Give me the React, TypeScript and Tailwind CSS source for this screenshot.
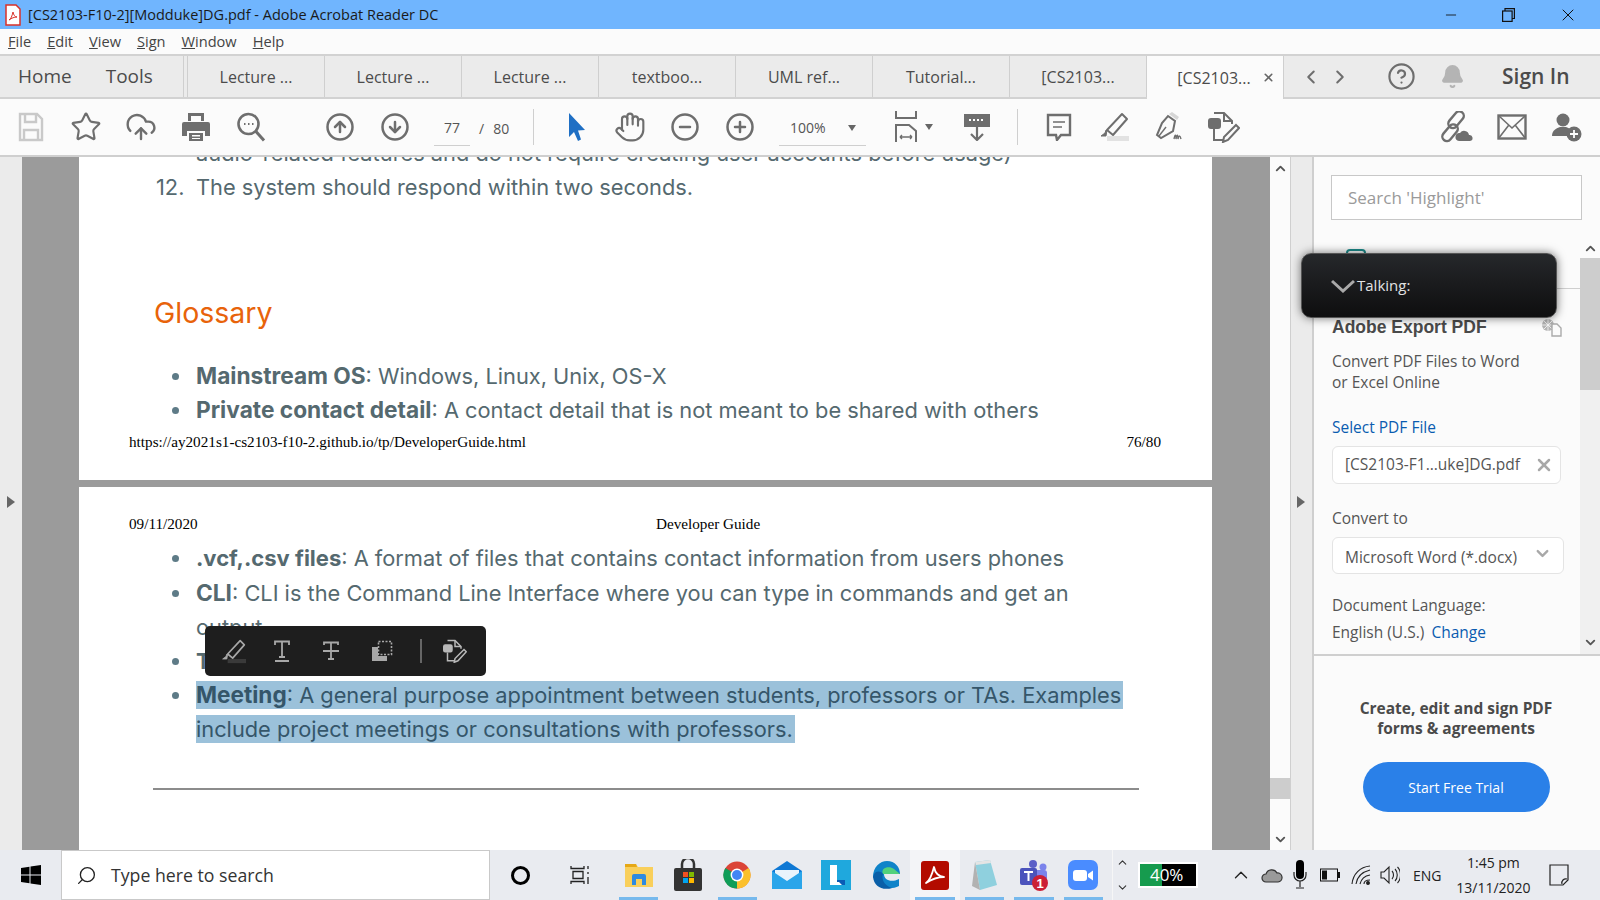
import React from "react";
import { Star, CloudUpload, Hand, CircleMinus, CirclePlus, CircleArrowUp, CircleArrowDown, ChevronLeft, ChevronRight, ChevronUp, ChevronDown, X, Bell, Search, Minus, CircleHelp } from "lucide-react";

const G = "#6e6e6e";

function Slot({ w = 55, className = "", children }: { w?: number; className?: string; children: React.ReactNode }) {
  return <div className={"flex items-center justify-center shrink-0 " + className} style={{ width: w }}>{children}</div>;
}

const Save = () => (
  <svg width="26" height="30" viewBox="0 0 26 30" fill="none" stroke="#c9c9c9" strokeWidth="2.4"><path d="M2 2h17l5 5v21H2z" /><path d="M7 2v8h11V2M6 28V18h14v10" /></svg>
);
const Printer = () => (
  <svg width="30" height="30" viewBox="0 0 30 30" fill={G}><path d="M7 1h16v8h-3V4H10v5H7z" /><path d="M3 10h24a2 2 0 0 1 2 2v12h-5v-5H6v5H1V12a2 2 0 0 1 2-2z" /><path d="M8 21h14v8H8zm3 2v1.500h8V23zm0 3v1h8v-1z" fillRule="evenodd" /></svg>
);
const FindIcon = () => (
  <svg width="30" height="30" viewBox="0 0 30 30" fill="none" stroke={G} strokeWidth="2.6"><circle cx="12.500" cy="12" r="10" /><path d="M20 19.500l8 9" strokeWidth="3" /><path d="M8 12h1.500M12 12h1.500M16 12h1.500" strokeWidth="2.200" /></svg>
);
const Pointer = () => (
  <svg width="20" height="30" viewBox="0 0 20 30"><path d="M2 1l16 17-7 .5 3 9-3 1.500-4-9-5 5z" fill="#1f6fc4" /></svg>
);
const FitIcon = () => (
  <svg width="24" height="32" viewBox="0 0 24 32" fill="none" stroke={G} strokeWidth="2"><path d="M2 0v7h20V0" /><path d="M2 31V14h13l7 6v11" /><path d="M6 26h12M6 26l2-2M6 26l2 2M18 26l-2-2M18 26l-2 2" strokeWidth="1.400" /></svg>
);
const ReadMode = () => (
  <svg width="28" height="28" viewBox="0 0 28 28" fill="none"><rect x="1" y="1" width="26" height="13" fill={G} /><path d="M6 7h2M10 7h2M14 7h2M18 7h2" stroke="#fff" strokeWidth="2" /><path d="M14 14v13M8 21l6 6 6-6" stroke={G} strokeWidth="2.200" /></svg>
);
const Comment = () => (
  <svg width="26" height="28" viewBox="0 0 26 28" fill="none" stroke={G} strokeWidth="2.400"><path d="M2 2h22v20H15l-4 5-1-5H2z" /><path d="M7 9h12M7 14h9" strokeWidth="1.600" /></svg>
);
const HighlightIcon = ({ c = G, bar = "#e2e2e2", size = 30 }: { c?: string; bar?: string; size?: number }) => (
  <svg width={size} height={size} viewBox="0 0 30 30" fill="none"><rect x="8" y="24" width="22" height="5" fill={bar} /><path d="M23 2l5 5-14 16-6-5z" stroke={c} strokeWidth="2" strokeLinejoin="round" /><path d="M8 18l-1 6h-5l4-3 1-3" fill={c} stroke={c} /></svg>
);
const SignIcon = () => (
  <svg width="30" height="30" viewBox="0 0 30 30" fill="none" stroke={G} strokeWidth="2"><path d="M14 4l7 5-2 10-12 7-4-3 5-12z" /><path d="M5 24l7-9" strokeWidth="1.400" /><path d="M15 2l3-2 7 5-2 3z" fill="#d6d6d6" stroke="none" /><path d="M20 27c1-5 2-5 2 0 1-5 2-5 2 0 1-4 2-4 3 0" strokeWidth="1.400" /></svg>
);
const EditDoc = ({ c = G, size = 32 }: { c?: string; size?: number }) => (
  <svg width={size} height={size} viewBox="0 0 32 32" fill="none" stroke={c} strokeWidth="2"><path d="M6 2h10l8 8v3M6 18v11h9" /><path d="M16 2v8h8" /><rect x="1" y="8" width="11" height="9" rx="2" fill={c} /><path d="M28 14l3 3-11 12-5 2 1-5z" /></svg>
);
const LinkCloud = () => (
  <svg width="32" height="32" viewBox="0 0 32 32" fill="none" stroke={G} strokeWidth="2.400"><rect x="11" y="-1" width="9" height="19" rx="4.500" transform="rotate(40 15 8)" /><rect x="5" y="12" width="9" height="19" rx="4.500" transform="rotate(40 9 21)" /><path d="M18 30a4 4 0 0 1 1-8 5 5 0 0 1 9 2 3 3 0 0 1 1 6z" fill={G} stroke="none" /></svg>
);
const UserPlus = () => (
  <svg width="32" height="30" viewBox="0 0 32 30"><circle cx="12" cy="8" r="6.500" fill={G} /><path d="M1 24c0-6 5-8 8-9h6c3 1 4 2 5 3-3 2-4 4-4 6H1z" fill={G} /><circle cx="23" cy="22" r="7.500" fill={G} /><path d="M23 18v8M19 22h8" stroke="#fff" strokeWidth="1.800" /></svg>
);

const Toolbar = () => (
  <div className="h-[58px] bg-[#fbfbfb] flex items-center pl-[3px] border-b-2 border-[#cfcfcf] shrink-0">
    <Slot><Save /></Slot>
    <Slot><Star size={32} strokeWidth={1.600} color={G} /></Slot>
    <Slot><CloudUpload size={32} strokeWidth={1.800} color={G} /></Slot>
    <Slot><Printer /></Slot>
    <Slot><FindIcon /></Slot>
    <Slot className="ml-[34px]"><CircleArrowUp size={30} strokeWidth={2} color={G} /></Slot>
    <Slot><CircleArrowDown size={30} strokeWidth={2} color={G} /></Slot>
    <div className="ml-[12px] w-[36px] h-[36px] mt-[2px] border-b border-[#cfcfcf] flex items-center justify-center text-[14px] text-[#555]">77</div>
    <div className="ml-[9px] w-[54px] text-[14px] text-[#555] mt-[2px]"><span className="mr-[9px]">/</span>80</div>
    <div className="w-px h-[36px] bg-[#cfcfcf] mr-[15px]" />
    <Slot><Pointer /></Slot>
    <div className="-ml-[2px]"><Slot><Hand size={32} strokeWidth={1.600} color={G} /></Slot></div>
    <Slot><CircleMinus size={30} strokeWidth={2} color={G} /></Slot>
    <Slot><CirclePlus size={30} strokeWidth={2} color={G} /></Slot>
    <div className="ml-[12px] w-[87px] h-[36px] mt-[2px] border-b border-[#cfcfcf] flex items-center text-[14px] text-[#555] pl-[11px]">
      100%
      <span className="ml-[22px] w-0 h-0 border-x-[4px] border-x-transparent border-t-[6px] border-t-[#666]" />
    </div>
    <div className="ml-[28px] flex items-center w-[40px]"><FitIcon /><span className="ml-[7px] w-0 h-0 border-x-[4px] border-x-transparent border-t-[6px] border-t-[#666]" /></div>
    <div className="ml-[3px]"><Slot w={80}><ReadMode /></Slot></div>
    <div className="w-px h-[36px] bg-[#cfcfcf] mr-[13px]" />
    <Slot><Comment /></Slot>
    <Slot><HighlightIcon /></Slot>
    <Slot><SignIcon /></Slot>
    <Slot><EditDoc /></Slot>
    <div className="ml-auto flex pr-[6px]">
      <Slot><LinkCloud /></Slot>
      <Slot><svg width="30" height="26" viewBox="0 0 30 26" fill="none" stroke={G} strokeWidth="2.400"><rect x="1.500" y="1.500" width="27" height="23" /><path d="M1.500 1.500L15 14 28.500 1.500M1.500 24.500l10-13M28.500 24.500l-10-13" strokeWidth="1.600" /></svg></Slot>
      <Slot><UserPlus /></Slot>
    </div>
  </div>
);

const tabs = ["Lecture ...", "Lecture ...", "Lecture ...", "textboo...", "UML ref...", "Tutorial...", "[CS2103..."];

const Tabs = () => (
  <div className="h-[45px] bg-[#ebebeb] border-y-2 border-[#d2d2d2] flex items-stretch shrink-0 text-[#4b4b4b]">
    <div className="w-[184px] flex items-center text-[19px] border-r border-[#cfcfcf] shrink-0">
      <span className="ml-[18px]">Home</span><span className="ml-[34px]">Tools</span>
    </div>
    <div className="w-[4px] border-r border-[#cfcfcf] shrink-0" />
    {tabs.map((t, i) => (
      <div key={i} className="w-[137px] flex items-center justify-center text-[16px] border-r border-[#cfcfcf] shrink-0">{t}</div>
    ))}
    <div className="w-[137px] bg-[#fbfbfb] -mb-[2px] flex items-center justify-center gap-[11px] text-[16px] border-r border-[#cfcfcf] shrink-0 pl-[22px]">
      [CS2103...<X size={13} strokeWidth={3} color="#666" />
    </div>
    <div className="flex items-center shrink-0">
      <ChevronLeft size={22} strokeWidth={2.200} color={G} className="ml-[16px]" />
      <ChevronRight size={22} strokeWidth={2.200} color={G} className="ml-[7px]" />
      <CircleHelp size={29} strokeWidth={1.800} color={G} className="ml-[36px]" />
      <Bell size={25} fill="#b4b4b4" color="#b4b4b4" className="ml-[24px]" />
      <span className="ml-[37px] text-[21px] font-semibold text-[#4b4b4b]">Sign In</span>
    </div>
  </div>
);

const DocRow = ({ children, h = 34, className = "" }: { children: React.ReactNode; h?: number; className?: string }) => (
  <div className={"flex items-center pl-[117px] whitespace-pre " + className} style={{ height: h }}>{children}</div>
);
const Bullet = () => <span className="absolute ml-[-24px] w-[7px] h-[7px] rounded-full bg-[#5e7b87]" />;

const Doc = () => (
  <div className="flex-1 flex flex-col bg-[#9b9b9b] overflow-hidden font-['Inter',sans-serif] text-[21.800px] text-[#55696f] min-w-0">
    <div className="ml-[57px] w-[1133px] h-[323px] bg-white overflow-hidden shrink-0">
      <DocRow className="-mt-[21px]">audio-related features and do not require creating user accounts before usage)</DocRow>
      <DocRow><span className="absolute ml-[-40px]">12.</span>The system should respond within two seconds.</DocRow>
      <div className="pl-[75px] mt-[89px] h-[40px] leading-[40px] text-[28.500px] text-[#e8630a]">Glossary</div>
      <div className="h-[26px]" />
      <DocRow><Bullet /><b className="font-bold text-[22.700px]">Mainstream OS</b>: Windows, Linux, Unix, OS-X</DocRow>
      <DocRow><Bullet /><b className="font-bold text-[22.700px]">Private contact detail</b>: A contact detail that is not meant to be shared with others</DocRow>
      <div className="flex justify-between pl-[50px] pr-[51px] h-[31px] items-center font-['Liberation_Serif',serif] text-[15.200px] text-black">
        <span>https://ay2021s1-cs2103-f10-2.github.io/tp/DeveloperGuide.html</span><span>76/80</span>
      </div>
    </div>
    <div className="h-[7px] shrink-0" />
    <div className="ml-[57px] w-[1133px] flex-1 bg-white overflow-hidden">
      <div className="flex pt-[20px] pl-[50px] h-[54px] items-center font-['Liberation_Serif',serif] text-[15.200px] text-black">
        <span className="w-[527px]">09/11/2020</span><span>Developer Guide</span>
      </div>
      <DocRow><Bullet /><b className="font-bold text-[22px]">.vcf,.csv files</b>: A format of files that contains contact information from users phones</DocRow>
      <DocRow className="mt-[1px]"><Bullet /><b className="font-bold text-[22.700px]">CLI</b>: CLI is the Command Line Interface where you can type in commands and get an</DocRow>
      <DocRow>output</DocRow>
      <DocRow><Bullet /><b className="font-bold">T</b></DocRow>
      <DocRow><Bullet /><span className="bg-[#9bc1da] h-[28px] leading-[28px] text-[#35566a] w-[927px] block"><b className="font-bold text-[22.600px]">Meeting</b>: A general purpose appointment between students, professors or TAs. Examples</span></DocRow>
      <DocRow><span className="bg-[#9bc1da] h-[28px] leading-[28px] text-[#35566a] w-[599px] block">include project meetings or consultations with professors.</span></DocRow>
      <div className="ml-[74px] mr-[73px] h-[2px] mt-[42px] bg-[#8c8c8c]" />
    </div>
  </div>
);

const AnnotBar = () => (
  <div className="absolute left-[205px] top-[626px] w-[281px] h-[50px] bg-[#1e1e1e] rounded-[5px] flex items-center pl-[16px]">
    <HighlightIcon c="#a8a8a8" bar="#3a3a3a" size={25} />
    <svg className="ml-[28px]" width="16" height="22" viewBox="0 0 16 22" fill="none" stroke="#a8a8a8" strokeWidth="1.800"><path d="M1 5V1.500h14V5M8 1.500V17M5 17h6M1 21h14" /></svg>
    <svg className="ml-[33px]" width="16" height="20" viewBox="0 0 16 20" fill="none" stroke="#a8a8a8" strokeWidth="1.800"><path d="M1 4V1.500h14V4M8 1.500V17M5 18h6M0 10h16" /></svg>
    <svg className="ml-[32px]" width="22" height="22" viewBox="0 0 22 22"><path d="M1 7h6v9h9v5H1z" fill="#a8a8a8" /><rect x="7.500" y="1.500" width="13" height="13" fill="none" stroke="#a8a8a8" strokeWidth="1.600" strokeDasharray="2 1.500" /></svg>
    <div className="ml-[27px] w-[2px] h-[24px] bg-[#666]" />
    <div className="ml-[21px]"><EditDoc c="#b8b8b8" size={24} /></div>
  </div>
);

const TalkingOverlay = () => (
  <div className="absolute left-[1301px] top-[253px] w-[256px] h-[65px] rounded-[10px] bg-gradient-to-b from-[#26282b] to-[#0e0e0f] border border-[#555] shadow-[0_0_10px_rgba(0,0,0,0.55)] flex items-center pl-[29px] text-[15px] text-[#e2e2e2] font-['Open_Sans',sans-serif]">
    <svg width="24" height="14" viewBox="0 0 24 14" fill="none" stroke="#a9a9a9" strokeWidth="3"><path d="M1 2l11 10L23 2" /></svg>
    <span className="ml-[2px]">Talking:</span>
  </div>
);

const Panel = () => (
  <div className="w-[288px] shrink-0 bg-[#fbfbfb] border-l-2 border-[#cfcfcf] flex flex-col text-[15.500px] text-[#555]">
    <div className="h-[81px] shrink-0 pl-[17px] pt-[18px]">
      <div className="w-[251px] h-[45px] bg-white border border-[#c8c8c8] flex items-center pl-[16px] text-[17px] text-[#9a9a9a]">Search 'Highlight'</div>
    </div>
    <div className="h-[418px] shrink-0 flex border-b-2 border-[#cfcfcf]">
      <div className="flex-1 min-w-0">
        <div className="h-[51px] border-b border-[#cfcfcf] pl-[32px] pt-[11px] flex">
          <svg width="20" height="20" viewBox="0 0 20 20" fill="none" stroke="#1c8a8a" strokeWidth="2"><path d="M1 20V4a3 3 0 0 1 3-3h12a3 3 0 0 1 3 3v16" /></svg>
        </div>
        <div className="pl-[18px] pt-[26px] pr-[18px]">
          <div className="flex items-center justify-between h-[24px] font-['Liberation_Sans',sans-serif] font-bold text-[17.500px] text-[#4a4a4a]">
            Adobe Export PDF
            <svg width="21" height="19" viewBox="0 0 21 19" fill="none"><circle cx="7" cy="7" r="6" fill="#b5b5b5" /><path d="M1 7h12M7 1v12M3 3l8 8M11 3l-8 8" stroke="#fbfbfb" strokeWidth="0.800" /><path d="M11 6h5l4 4v8h-9z" fill="#fbfbfb" stroke="#aaa" strokeWidth="1.400" /></svg>
          </div>
          <div className="mt-[12px] leading-[21px]">Convert PDF Files to Word<br />or Excel Online</div>
          <div className="mt-[24px] leading-[21px] text-[#0a5cb0]">Select PDF File</div>
          <div className="mt-[8px] w-[229px] h-[38px] bg-white border border-[#e4e4e4] rounded-[6px] flex items-center justify-between pl-[12px] pr-[6px] whitespace-nowrap">
            [CS2103-F1...uke]DG.pdf<X size={20} strokeWidth={3} color="#a8a8a8" />
          </div>
          <div className="mt-[24px] leading-[21px]">Convert to</div>
          <div className="mt-[8px] w-[232px] h-[37px] bg-white border border-[#e4e4e4] rounded-[6px] flex items-center justify-between pl-[12px] pr-[11px] pt-[4px] whitespace-nowrap">
            Microsoft Word (*.docx)<ChevronDown size={19} strokeWidth={3} color="#a8a8a8" className="-mt-[8px]" />
          </div>
          <div className="mt-[21px] leading-[21px]">Document Language:</div>
          <div className="mt-[6px] leading-[21px]">English (U.S.) <span className="text-[#0a5cb0] ml-[3px]">Change</span></div>
        </div>
      </div>
      <div className="w-[20px] shrink-0 bg-[#f0f0f0] flex flex-col items-center h-[416px]">
        <div className="h-[20px] w-full bg-[#fbfbfb] flex items-center justify-center"><ChevronUp size={15} strokeWidth={3} color="#555" /></div>
        <div className="h-[132px] w-full bg-[#cdcdcd]" />
        <div className="flex-1" />
        <ChevronDown size={15} strokeWidth={3} color="#555" className="mb-[4px]" />
      </div>
    </div>
    <div className="flex flex-col items-center pt-[42px] pr-[2px]">
      <div className="text-center font-bold leading-[20px] text-[15.500px] text-[#4a4a4a]">Create, edit and sign PDF<br />forms &amp; agreements</div>
      <div className="mt-[24px] w-[187px] h-[50px] rounded-full bg-[#2a80e8] flex items-center justify-center text-[14px] text-white">Start Free Trial</div>
    </div>
  </div>
);

const MainArea = () => (
  <div className="flex-1 min-h-0 flex">
    <div className="w-[22px] shrink-0 bg-[#ebebeb] flex items-center pl-[7px] pb-[4px]"><span className="w-0 h-0 border-y-[6px] border-y-transparent border-l-[8px] border-l-[#666]" /></div>
    <div className="w-[1248px] shrink-0 flex"><Doc /></div>
    <div className="w-[20px] shrink-0 bg-[#fbfbfb] flex flex-col items-center">
      <ChevronUp size={15} strokeWidth={3} color="#555" className="mt-[4px]" />
      <div className="flex-1" />
      <div className="h-[21px] w-full bg-[#cdcdcd]" />
      <div className="h-[33px]" />
      <ChevronDown size={15} strokeWidth={3} color="#555" className="mb-[3px]" />
    </div>
    <div className="w-[22px] shrink-0 bg-[#ebebeb] border-l border-[#cfcfcf] flex items-center pl-[6px] pb-[4px]"><span className="w-0 h-0 border-y-[6px] border-y-transparent border-l-[8px] border-l-[#666]" /></div>
    <Panel />
  </div>
);

const TB = ({ active, sel, children }: { active?: boolean; sel?: boolean; children: React.ReactNode }) => (
  <div className={"relative w-[49.400px] h-[50px] shrink-0 flex items-center justify-center " + (sel ? "bg-[#f3f4f7]" : "")}>
    {children}
    {active && <span className="absolute bottom-0 left-[5px] right-[5px] h-[3px] bg-[#76b9ed]" />}
  </div>
);

const Taskbar = () => (
  <div className="h-[50px] shrink-0 bg-[#e9ebf0] flex items-center text-[#222]">
    <div className="w-[61px] shrink-0 flex justify-center">
      <svg width="20" height="20" viewBox="0 0 20 20" fill="#000"><path d="M0 3l8.500-1.200V9.500H0zM9.500 1.600L20 0v9.500H9.500zM0 10.500h8.500v7.700L0 17zM9.500 10.500H20V20l-10.500-1.500z" /></svg>
    </div>
    <div className="w-[429px] h-[50px] shrink-0 bg-white border border-[#c9c9c9] flex items-center pl-[14px] text-[17.700px] text-[#333]">
      <Search size={21} strokeWidth={1.500} color="#222" className="-scale-x-100" />
      <span className="ml-[14px]">Type here to search</span>
    </div>
    <div className="w-[40px] shrink-0 flex justify-end"><span className="w-[19px] h-[19px] rounded-full border-[3px] border-black" /></div>
    <div className="w-[59px] shrink-0 flex justify-center ml-[20px]"><svg width="20" height="20" viewBox="0 0 20 20" fill="none" stroke="#222" strokeWidth="1.300"><path d="M1 1v2.500h13V1M3 6.500h10v7H3zM1 19v-2.500h13V19" /><path d="M18 1v3M18 7v2M18 12v7" /></svg></div>
    <div className="ml-[5px] flex">
      <TB active><svg width="28" height="28" viewBox="0 0 28 28"><path d="M0 3h11l2 3h15v20H0z" fill="#f9cf5b" /><path d="M0 3h11l1 3H0z" fill="#e6a817" /><path d="M7 24V15a2 2 0 0 1 2-2h10a2 2 0 0 1 2 2v9h-4v-6h-6v6z" fill="#2f8ae0" /></svg></TB>
      <TB><svg width="30" height="32" viewBox="0 0 30 32"><rect x="1" y="9" width="28" height="23" rx="2" fill="#333" /><path d="M9 10V5a6 6 0 0 1 12 0v5" fill="none" stroke="#333" strokeWidth="2.500" /><rect x="10" y="13" width="5" height="5" fill="#f25022" /><rect x="16" y="13" width="5" height="5" fill="#7fba00" /><rect x="10" y="19" width="5" height="5" fill="#00a4ef" /><rect x="16" y="19" width="5" height="5" fill="#ffb900" /></svg></TB>
      <TB active><svg width="28" height="28" viewBox="0 0 48 48"><circle cx="24" cy="24" r="23" fill="#db4437" /><path d="M24 24L44 12A23 23 0 0 1 24 47z" fill="#fbc02d" /><path d="M24 24L24 47A23 23 0 0 1 4 12z" fill="#0f9d58" /><circle cx="24" cy="24" r="11" fill="#fff" /><circle cx="24" cy="24" r="8.500" fill="#4285f4" /></svg></TB>
      <TB><svg width="30" height="28" viewBox="0 0 30 28"><path d="M0 10L15 0l15 10v18H0z" fill="#0f78d4" /><path d="M3 9h24v10l-12 6-12-6z" fill="#e8f4fc" /><path d="M0 10l15 10 15-10v18H0z" fill="#2aa5ea" /></svg></TB>
      <TB><svg width="30" height="30" viewBox="0 0 30 30"><rect width="30" height="30" fill="#1fa8dd" /><path d="M9 5h7v15h8v5H9z" fill="#fff" /><path d="M16 20h8v5h-3l-3-3h-2z" fill="#0a5bb5" /></svg></TB>
      <TB><svg width="30" height="30" viewBox="0 0 30 30"><path d="M2 17C2 7 9 1 16 1c8 0 13 6 13 13H13c0 6 7 9 15 5v7c-10 5-20 1-22-6z" fill="#0f83c9" /><path d="M29 14H12c-3-6 6-9 11-5" fill="#52d17c" /><path d="M2 17c1-6 7-7 10-3-2 6 2 12 9 14C11 31 3 26 2 17z" fill="#0a5fa8" /></svg></TB>
      <TB active sel><svg width="28" height="29" viewBox="0 0 28 29"><rect width="28" height="29" rx="3" fill="#b30b00" /><path d="M5 22c3-2 6-8 8-16 1 6 5 10 10 10-6 0-12 2-18 6z" fill="none" stroke="#fff" strokeWidth="1.800" strokeLinejoin="round" /></svg></TB>
      <TB active><svg width="28" height="32" viewBox="0 0 28 32"><path d="M5 3l15-2 7 25-17 5z" fill="#8fd0de" /><path d="M5 3l15-2 1 3-15 2z" fill="#e4e4e4" /><path d="M5 3l5 28-8-4z" fill="#b2b2b2" /></svg></TB>
      <TB active><svg width="30" height="32" viewBox="0 0 30 32"><circle cx="14" cy="5" r="4" fill="#5b5fc7" /><circle cx="24" cy="8" r="3.500" fill="#7b83eb" /><rect x="14" y="11" width="14" height="13" rx="3" fill="#7b83eb" /><rect x="1" y="9" width="17" height="17" rx="2" fill="#4b53bc" /><path d="M5 13h9M9.500 13v9" stroke="#fff" strokeWidth="2" /><circle cx="21" cy="24" r="8" fill="#cc1f35" /><text x="21" y="29" textAnchor="middle" fontSize="13" fontWeight="700" fill="#fff" fontFamily="Liberation Sans">1</text></svg></TB>
      <TB active><svg width="30" height="30" viewBox="0 0 30 30"><rect width="30" height="30" rx="7" fill="#4a8cff" /><rect x="5" y="10" width="14" height="11" rx="3" fill="#fff" /><path d="M20 14l5-3.500v10L20 17z" fill="#fff" /></svg></TB>
    </div>
    <div className="w-px ml-[4px] h-[50px] bg-[#f6f6f6]" />
    <div className="w-[20px] h-[50px] flex flex-col items-center justify-between py-[6px] shrink-0">
      <ChevronUp size={13} strokeWidth={2} color="#333" /><ChevronDown size={13} strokeWidth={2} color="#333" />
    </div>
    <div className="ml-[5px] w-[60px] h-[26px] border-2 border-white flex text-[17px] text-white shrink-0 leading-[22px]">
      <div className="w-[22px] bg-[#169b4e] shrink-0" />
      <div className="flex-1 bg-black" />
      <span className="absolute ml-[10px]">40%</span>
    </div>
    <ChevronUp size={22} strokeWidth={1.500} color="#222" className="ml-[32px]" />
    <svg className="ml-[9px]" width="22" height="16" viewBox="0 0 22 16" fill="#9a9a9a" stroke="#333" strokeWidth="1.200"><path d="M5 15a4 4 0 0 1 0-8 6 6 0 0 1 11-1 4.500 4.500 0 0 1 1 9z" /></svg>
    <svg className="ml-[10px]" width="14" height="30" viewBox="0 0 14 30"><rect x="3" y="0" width="8" height="19" rx="4" fill="#000" /><path d="M1 12v3a6 6 0 0 0 12 0v-3M7 21v6M3 28h8" fill="none" stroke="#222" strokeWidth="1.200" /></svg>
    <svg className="ml-[13px]" width="20" height="14" viewBox="0 0 20 14" fill="none"><rect x="0.500" y="1" width="17" height="12" stroke="#111" /><rect x="2" y="2.500" width="5" height="9" fill="#111" /><rect x="18" y="4" width="2" height="6" fill="#111" /></svg>
    <svg className="ml-[11px]" width="20" height="20" viewBox="0 0 20 20" fill="none" stroke="#222" strokeWidth="1.100"><path d="M1 19C2 9 9 2 19 1M5 19c1-7 6-12 14-14M9 19c1-4 4-8 10-9" /><path d="M13 19c0-2 2-4 6-4" /><circle cx="17" cy="18" r="1.400" fill="#222" /></svg>
    <svg className="ml-[9px]" width="20" height="20" viewBox="0 0 20 20" fill="none" stroke="#222" strokeWidth="1.100"><path d="M1 7h3l5-5v16l-5-5H1zM12 6c2 2 2 6 0 8M15 4c3 3 3 9 0 12M17.500 2c4 4 4 12 0 16" /></svg>
    <span className="ml-[13px] text-[14px] text-[#222]">ENG</span>
    <div className="w-[92px] ml-[6px] text-center text-[14px] leading-[25px] text-[#222] shrink-0">1:45 pm<br />13/11/2020</div>
    <svg className="ml-[10px]" width="20" height="22" viewBox="0 0 20 22" fill="none" stroke="#222" strokeWidth="1.200"><path d="M1 1h18v15l-5 5H1z" /><path d="M13 20a4 4 0 0 1 5-5" /></svg>
  </div>
);

export default function App() {
  return (
    <div className="relative w-[1600px] h-[900px] overflow-hidden flex flex-col bg-[#fbfbfb] font-['Open_Sans',sans-serif]">
      <div className="h-[29px] bg-[#70b5fe] flex items-center shrink-0 text-[14.500px] text-[#1a1a1a]">
        <svg className="ml-[5px]" width="16" height="22" viewBox="0 0 16 22" fill="#fff" stroke="#d9322a" strokeWidth="1.500"><path d="M1 1h10l4 4v16H1z" /><path d="M4 16c2-1 3-4 4-8 .5 3 2 5 4 5-3 0-5 1-8 3z" fill="none" strokeWidth="1" /></svg>
        <span className="ml-[7px]">[CS2103-F10-2][Modduke]DG.pdf - Adobe Acrobat Reader DC</span>
        <div className="ml-auto flex items-center">
          <Minus size={16} strokeWidth={1.300} color="#111" />
          <svg className="ml-[43px]" width="13" height="14" viewBox="0 0 13 14" fill="none" stroke="#111" strokeWidth="1.200"><rect x="0.600" y="3" width="9.500" height="10.400" /><path d="M3 3V0.700h9.400v9.800h-2.400" /></svg>
          <X size={20} strokeWidth={1.200} color="#111" className="ml-[43px] mr-[22px]" />
        </div>
      </div>
      <div className="h-[25px] flex items-center shrink-0 text-[14.600px] text-[#444] pl-[8px] gap-[16px]">
        <span><u>F</u>ile</span><span><u>E</u>dit</span><span><u>V</u>iew</span><span><u>S</u>ign</span><span><u>W</u>indow</span><span><u>H</u>elp</span>
      </div>
      <Tabs />
      <Toolbar />
      <MainArea />
      <Taskbar />
      <AnnotBar />
      <TalkingOverlay />
    </div>
  );
}
